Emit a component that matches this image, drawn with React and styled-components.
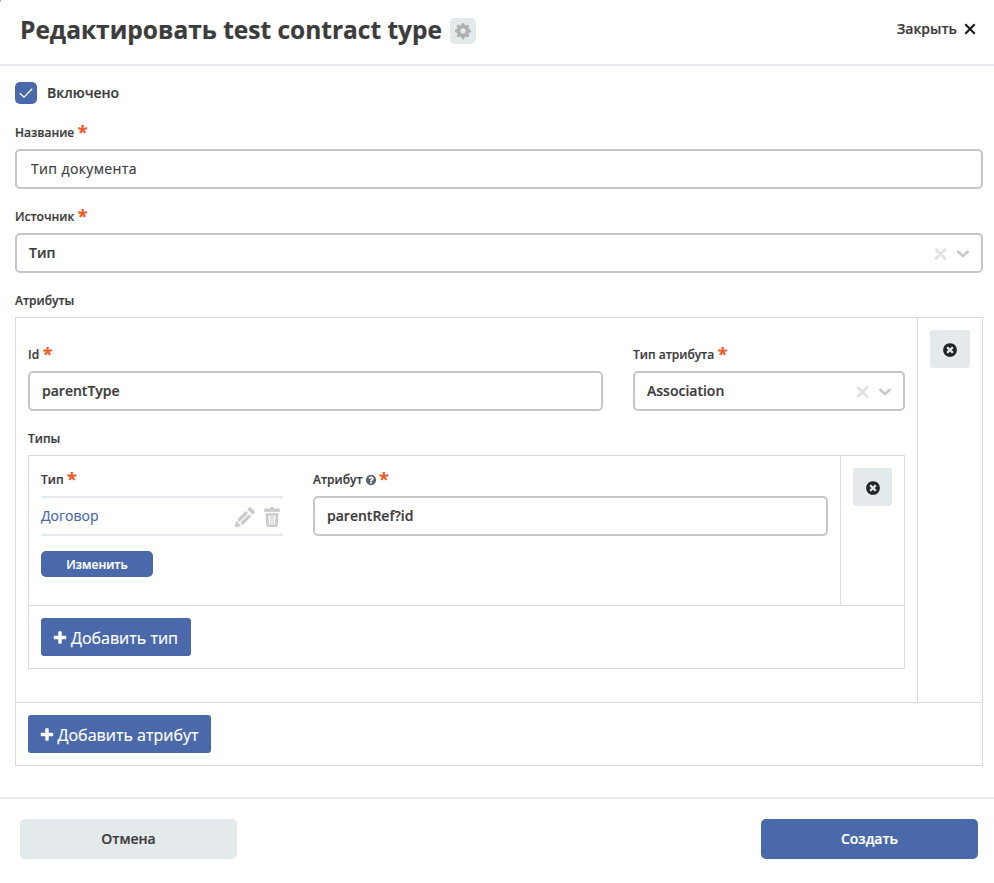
import React from "react";
import styled, { createGlobalStyle } from "styled-components";

const c = {
  text: "#3c3c3c",
  blue: "#4969aa",
  pale: "#e4e9ec",
  field: "#c6c6c6",
  line: "#dadce0",
  required: "#f05a28",
};

const GlobalStyle = createGlobalStyle`
  *, *::before, *::after { box-sizing: border-box; }
  body { margin: 0; background: #32435c; -webkit-text-stroke: 0.2px; }
  body, button, input { font-family: "Open Sans", "Noto Sans", sans-serif; color: ${c.text}; }
  button { border: 0; padding: 0; cursor: pointer; }
  svg { display: block; flex: none; }
`;

const Dialog = styled.main`
  width: 994px;
  height: 883px;
  background: #fff;
  border-top-left-radius: 1px 3px;
  display: flex;
  flex-direction: column;
`;

const Header = styled.header`
  height: 66px;
  border-bottom: 2px solid ${c.pale};
  padding: 0 18px 6px 20px;
  display: flex;
  align-items: center;
`;

const Title = styled.h1`
  margin: 0;
  padding-top: 1px;
  font-size: 24.5px;
  line-height: 34px;
  font-weight: 700;
  white-space: nowrap;
`;

const SettingsButton = styled.button`
  width: 26px;
  height: 26px;
  margin: 4px 0 0 8px;
  border-radius: 5px;
  background: ${c.pale};
  display: grid;
  place-items: center;
`;

const CloseButton = styled.button`
  margin-left: auto;
  background: none;
  display: flex;
  align-items: center;
  gap: 7px;
  font-size: 14px;
  line-height: 20px;
  font-weight: 600;
`;

const Form = styled.form`
  flex: 1;
  padding: 16px 11px 0 15px;
`;

const CheckRow = styled.label`
  height: 22px;
  display: flex;
  align-items: center;
  gap: 10px;
  font-size: 14px;
  line-height: 20px;
  font-weight: 600;
`;

const CheckBox = styled.span`
  width: 22px;
  height: 22px;
  border-radius: 5px;
  background: ${c.blue};
  display: grid;
  place-items: center;
`;

const Field = styled.div`
  margin-top: ${(p) => p.$gap || 0}px;
  min-width: 0;
`;

const Label = styled.div`
  height: 16px;
  margin-bottom: 8px;
  display: flex;
  align-items: center;
  font-size: 12px;
  line-height: 16px;
  font-weight: 600;
  white-space: nowrap;
`;

const Star = styled.span`
  height: 20px;
  margin-left: 3.5px;
  color: ${c.required};
  font-size: 18px;
  line-height: 18px;
  font-weight: 700;
`;

const Help = styled.span`
  margin: 0 -1px 0 2px;
  color: #5d6570;
`;

const Control = styled.div`
  height: 40px;
  border: 2px solid ${c.field};
  border-radius: 5px;
  display: flex;
  align-items: center;
  padding: 0 11px 0 12px;
`;

const TextInput = styled.input`
  width: 100%;
  height: 36px;
  border: 0;
  outline: 0;
  padding: 0 0 1px ${(p) => (p.$light ? 2 : 0)}px;
  background: none;
  font-size: 14px;
  font-weight: ${(p) => (p.$light ? 400 : 600)};
  letter-spacing: ${(p) => (p.$light ? "0.38px" : "normal")};
`;

const SelectValue = styled.span`
  flex: 1;
  font-size: 14px;
  line-height: 20px;
  font-weight: 600;
  padding-bottom: 1px;
`;

const SelectIcons = styled.span`
  display: flex;
  align-items: center;
  gap: 9px;
  padding-top: 2px;
`;

const Table = styled.section`
  border: 1px solid ${c.line};
`;

const Row = styled.div`
  height: ${(p) => p.$height}px;
  border-bottom: 1px solid ${c.line};
  display: flex;
`;

const Content = styled.div`
  flex: 1;
  min-width: 0;
  padding: ${(p) => p.$top}px 12px 0;
`;

const Actions = styled.div`
  width: ${(p) => p.$width}px;
  border-left: 1px solid ${c.line};
  padding: 12px 12px 0;
`;

const RemoveButton = styled.button`
  width: 100%;
  height: 38px;
  border-radius: 3px;
  background: ${c.pale};
  color: #212529;
  display: flex;
  justify-content: center;
  padding-top: 12px;
`;

const TableFooter = styled.div`
  padding: 12px;
`;

const AddButton = styled.button`
  height: 38px;
  width: ${(p) => p.$width}px;
  padding: 2px 2px 0 0;
  border-radius: 3px;
  background: ${c.blue};
  color: #fff;
  font-size: 16px;
  line-height: 24px;
  display: flex;
  align-items: center;
  justify-content: center;
  gap: 3px;
  white-space: nowrap;
`;

const Columns = styled.div`
  display: grid;
  grid-template-columns: ${(p) => p.$columns};
  column-gap: 30px;
`;

const Linked = styled.div`
  height: 40px;
  border-top: 2px solid ${c.pale};
  border-bottom: 2px solid ${c.pale};
  display: flex;
  align-items: center;
  padding-right: 3px;
`;

const LinkedName = styled.a`
  flex: 1;
  color: ${c.blue};
  font-size: 14px;
  line-height: 20px;
`;

const LinkedTools = styled.span`
  display: flex;
  gap: 9px;
  padding-top: 2px;
`;

const ChangeButton = styled.button`
  width: 112px;
  height: 26px;
  margin-top: 15px;
  padding-top: 1px;
  border-radius: 5px;
  background: ${c.blue};
  color: #fff;
  font-size: 12px;
  line-height: 16px;
  font-weight: 600;
`;

const Footer = styled.footer`
  height: 86px;
  border-top: 2px solid ${c.pale};
  padding: 20px 16px 0 20px;
  display: flex;
  justify-content: space-between;
`;

const FooterButton = styled.button`
  width: 217px;
  height: 40px;
  padding-bottom: 2px;
  border-radius: 5px;
  font-size: 14px;
  font-weight: 600;
  background: ${(p) => (p.$primary ? c.blue : c.pale)};
  color: ${(p) => (p.$primary ? "#fff" : c.text)};
`;

const Glyph = ({ size, d }) => (
  <svg width={size} height={size} viewBox="0 0 1792 1792" fill="currentColor">
    <path d={d} />
  </svg>
);

const disc =
  "m387-226q0 209-103 385.5t-279.5 279.5-385.5 103-385.5-103-279.5-279.5-103-385.5 103-385.5 279.5-279.5 385.5-103 385.5 103 279.5 279.5 103 385.5z";

const paths = {
  plus: "M1600 736v192q0 40-28 68t-68 28h-416v416q0 40-28 68t-68 28h-192q-40 0-68-28t-28-68v-416h-416q-40 0-68-28t-28-68v-192q0-40 28-68t68-28h416v-416q0-40 28-68t68-28h192q40 0 68 28t28 68v416h416q40 0 68 28t28 68z",
  remove:
    "M1277 1122q0-26-19-45l-181-181 181-181q19-19 19-45 0-27-19-46l-90-90q-19-19-46-19-26 0-45 19l-181 181-181-181q-19-19-45-19-27 0-46 19l-90 90q-19 19-19 46 0 26 19 45l181 181-181 181q-19 19-19 45 0 27 19 46l90 90q19 19 46 19 26 0 45-19l181-181 181 181q19 19 45 19 27 0 46-19l90-90q19-19 19-46z" +
    disc,
  help: "M1024 1376v-192q0-14-9-23t-23-9h-192q-14 0-23 9t-9 23v192q0 14 9 23t23 9h192q14 0 23-9t9-23zm256-672q0-88-55.5-163t-138.5-116-170-41q-243 0-371 213-15 24 8 42l132 100q7 6 19 6 16 0 25-12 53-68 86-92 34-24 86-24 48 0 85.5 26t37.5 59q0 38-20 61t-68 45q-63 28-115.5 86.5t-52.5 125.5v36q0 14 9 23t23 9h192q14 0 23-9t9-23q0-19 21.5-49.5t54.5-49.5q32-18 49-28.5t46-35 44.5-48 28-60.5 12.5-81zm384 192q0 209-103 385.5t-279.5 279.5-385.5 103-385.5-103-279.5-279.5-103-385.5 103-385.5 279.5-279.5 385.5-103 385.5 103 279.5 279.5 103 385.5z",
};

const GearIcon = () => (
  <svg width="18" height="18" viewBox="-9 -9 18 18" fill="none" stroke="#aeb0b1">
    <circle r="4.5" strokeWidth="3.6" />
    {[0, 45, 90, 135, 180, 225, 270, 315].map((a) => (
      <path key={a} d="M0-5.5V-6.7" strokeWidth="3" strokeLinecap="round" transform={`rotate(${a})`} />
    ))}
  </svg>
);

const CloseIcon = () => (
  <svg width="12" height="12" viewBox="0 0 12 12" stroke="#151515" strokeWidth="2.1">
    <path d="M1.3 1.3 10.7 10.7M10.7 1.3 1.3 10.7" />
  </svg>
);

const CheckIcon = () => (
  <svg width="14" height="12" viewBox="0 0 14 12" fill="none" stroke="#fff" strokeWidth="1.3">
    <path d="M.8 6.2 5 10.2 13.2 1.8" />
  </svg>
);

const ClearIcon = () => (
  <svg width="13" height="12" viewBox="0 0 13 12" stroke="#e2e2e2" strokeWidth="2.8" strokeLinecap="round">
    <path d="M2 1.5 11 10.5M11 1.5 2 10.5" />
  </svg>
);

const ChevronIcon = () => (
  <svg width="14" height="8" viewBox="0 0 14 8" fill="none" stroke="#cacaca" strokeWidth="2.7" strokeLinecap="round" strokeLinejoin="round">
    <path d="M2.3 1.8 7 6.1 11.7 1.8" />
  </svg>
);

const PencilIcon = () => (
  <svg width="20" height="20" viewBox="0 0 20 20" fill="#cacaca">
    <path d="M12.4 2.5 14.2.6q.8-.8 1.6 0l3.7 3.7q.8.8 0 1.6l-1.9 1.9z" />
    <path d="M4.2 12.8 11 6M7.4 16 14.2 9.2" stroke="#cacaca" strokeWidth="3.2" strokeLinecap="round" />
    <path d="M.9 14.6q.6-.7 1.3-.1.8.6 1 1.5.2.6 1 .9 1 .3 1.4 1.1.3.7-.4 1L1.4 20Q0 20.3.1 18.8z" />
  </svg>
);

const TrashIcon = () => (
  <svg width="16" height="20" viewBox="0 0 16 20" fill="#cacaca">
    <path d="M6 0h4v1.5h5q1 0 1 1v2.2H0V2.5q0-1 1-1h5z" />
    <path fillRule="evenodd" d="M1.3 6.2h13.4l-1.1 12.3q-.2 1.5-1.7 1.5H4.1q-1.5 0-1.7-1.5zM4.5 8.4l.4 9.3h1.5V8.4zm3 0v9.3h1V8.4zm2.1 0v9.3h1.5l.4-9.3z" />
  </svg>
);

function FieldLabel({ children, required, help }) {
  return (
    <Label>
      {children}
      {help && (
        <Help>
          <Glyph size={12} d={paths.help} />
        </Help>
      )}
      {required && <Star>*</Star>}
    </Label>
  );
}

function Select({ value }) {
  return (
    <Control>
      <SelectValue>{value}</SelectValue>
      <SelectIcons>
        <ClearIcon />
        <ChevronIcon />
      </SelectIcons>
    </Control>
  );
}

function Input({ value, light }) {
  return (
    <Control>
      <TextInput defaultValue={value} $light={light} />
    </Control>
  );
}

function Remove() {
  return (
    <RemoveButton type="button" aria-label="Удалить">
      <Glyph size={16} d={paths.remove} />
    </RemoveButton>
  );
}

function TypesTable() {
  return (
    <Table>
      <Row $height={150}>
        <Content $top={16}>
          <Columns $columns="242px 1fr">
            <Field>
              <FieldLabel required>Тип</FieldLabel>
              <Linked>
                <LinkedName>Договор</LinkedName>
                <LinkedTools>
                  <PencilIcon />
                  <TrashIcon />
                </LinkedTools>
              </Linked>
              <ChangeButton type="button">Изменить</ChangeButton>
            </Field>
            <Field>
              <FieldLabel required help>Атрибут</FieldLabel>
              <Input value="parentRef?id" />
            </Field>
          </Columns>
        </Content>
        <Actions $width={64}>
          <Remove />
        </Actions>
      </Row>
      <TableFooter>
        <AddButton type="button" $width={150}>
          <Glyph size={16} d={paths.plus} />
          Добавить тип
        </AddButton>
      </TableFooter>
    </Table>
  );
}

export default function App() {
  return (
    <>
      <GlobalStyle />
      <Dialog>
        <Header>
          <Title>Редактировать test contract type</Title>
          <SettingsButton aria-label="Настройки">
            <GearIcon />
          </SettingsButton>
          <CloseButton>
            Закрыть
            <CloseIcon />
          </CloseButton>
        </Header>
        <Form>
          <CheckRow>
            <CheckBox>
              <CheckIcon />
            </CheckBox>
            Включено
          </CheckRow>
          <Field $gap={21}>
            <FieldLabel required>Название</FieldLabel>
            <Input value="Тип документа" light />
          </Field>
          <Field $gap={20}>
            <FieldLabel required>Источник</FieldLabel>
            <Select value="Тип" />
          </Field>
          <Field $gap={20}>
            <FieldLabel>Атрибуты</FieldLabel>
            <Table>
              <Row $height={385}>
                <Content $top={29}>
                  <Columns $columns="575px 1fr">
                    <Field>
                      <FieldLabel required>Id</FieldLabel>
                      <Input value="parentType" />
                    </Field>
                    <Field>
                      <FieldLabel required>Тип атрибута</FieldLabel>
                      <Select value="Association" />
                    </Field>
                  </Columns>
                  <Field $gap={20}>
                    <FieldLabel>Типы</FieldLabel>
                    <TypesTable />
                  </Field>
                </Content>
                <Actions $width={65}>
                  <Remove />
                </Actions>
              </Row>
              <TableFooter>
                <AddButton type="button" $width={183}>
                  <Glyph size={16} d={paths.plus} />
                  Добавить атрибут
                </AddButton>
              </TableFooter>
            </Table>
          </Field>
        </Form>
        <Footer>
          <FooterButton type="button">Отмена</FooterButton>
          <FooterButton type="button" $primary>Создать</FooterButton>
        </Footer>
      </Dialog>
    </>
  );
}
